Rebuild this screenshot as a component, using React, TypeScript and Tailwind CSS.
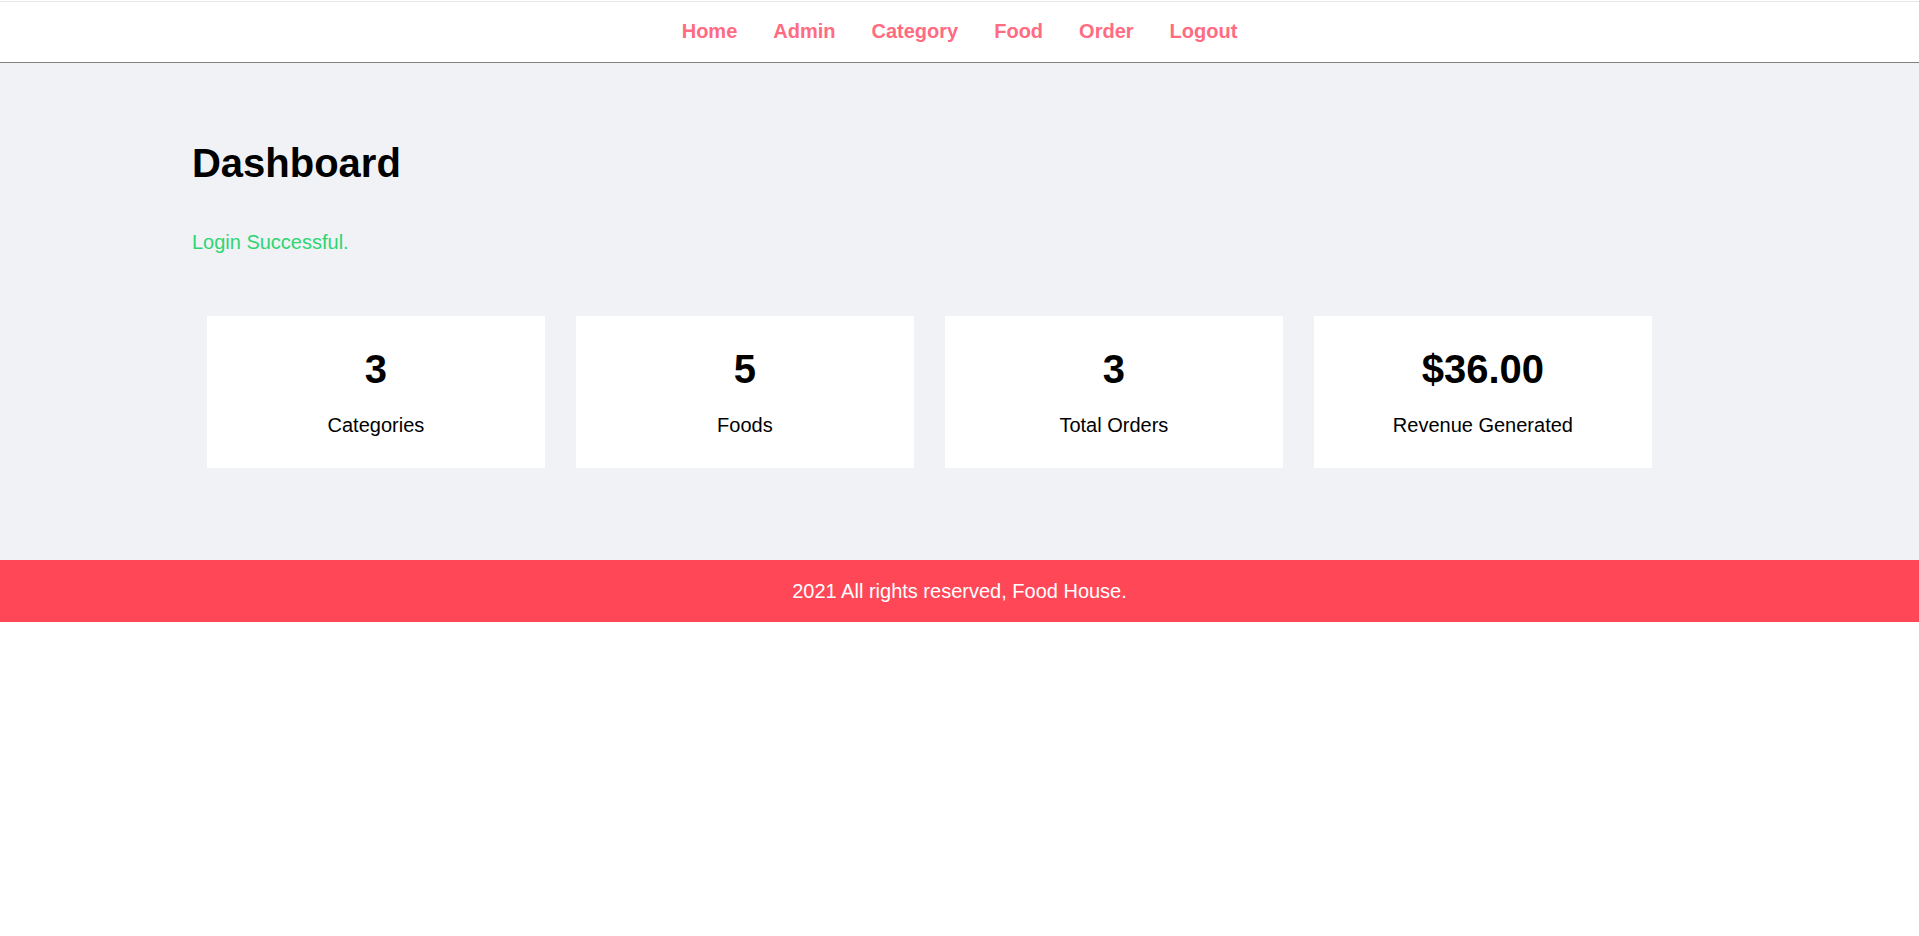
import React from "react";

const links = ["Home", "Admin", "Category", "Food", "Order", "Logout"];
const stats = [
  { value: "3", label: "Categories" },
  { value: "5", label: "Foods" },
  { value: "3", label: "Total Orders" },
  { value: "$36.00", label: "Revenue Generated" },
];

export default function App() {
  return (
    <div
      className="min-h-[936px] bg-white text-black"
      style={{ fontFamily: '"Liberation Sans", Arial, sans-serif' }}
    >
      <div className="h-px bg-white" />
      <nav className="border-t border-b border-t-[#e6e6e6] border-b-[#808080] bg-white">
        <ul className="flex h-[60px] items-center justify-center gap-[36px]">
          {links.map((l) => (
            <li key={l}>
              <a href="#" className="text-[20px] font-bold leading-[23px] text-[#ff6b81] no-underline">
                {l}
              </a>
            </li>
          ))}
        </ul>
      </nav>

      <main className="bg-[#f1f2f6] pb-[92px]">
        <div className="mx-auto w-[80%] pt-[77px]">
          <h1 className="text-[40px] font-bold leading-[46px]">Dashboard</h1>
          <p className="mt-[45px] text-[20px] leading-[23px] text-[#2ed573]">Login Successful.</p>
          <div className="mt-[62px] ml-[15px] flex gap-[31px]">
            {stats.map((s) => (
              <div key={s.label} className="flex w-[338px] flex-col items-center bg-white pt-[30px] pb-[31px] text-center">
                <div className="text-[40px] font-bold leading-[46px]">{s.value}</div>
                <div className="mt-[22px] text-[20px] leading-[23px]">{s.label}</div>
              </div>
            ))}
          </div>
        </div>
      </main>

      <footer className="flex h-[62px] items-center justify-center bg-[#ff4757] text-[20px] leading-[23px] text-white">
        2021 All rights reserved, Food House.
      </footer>
    </div>
  );
}
